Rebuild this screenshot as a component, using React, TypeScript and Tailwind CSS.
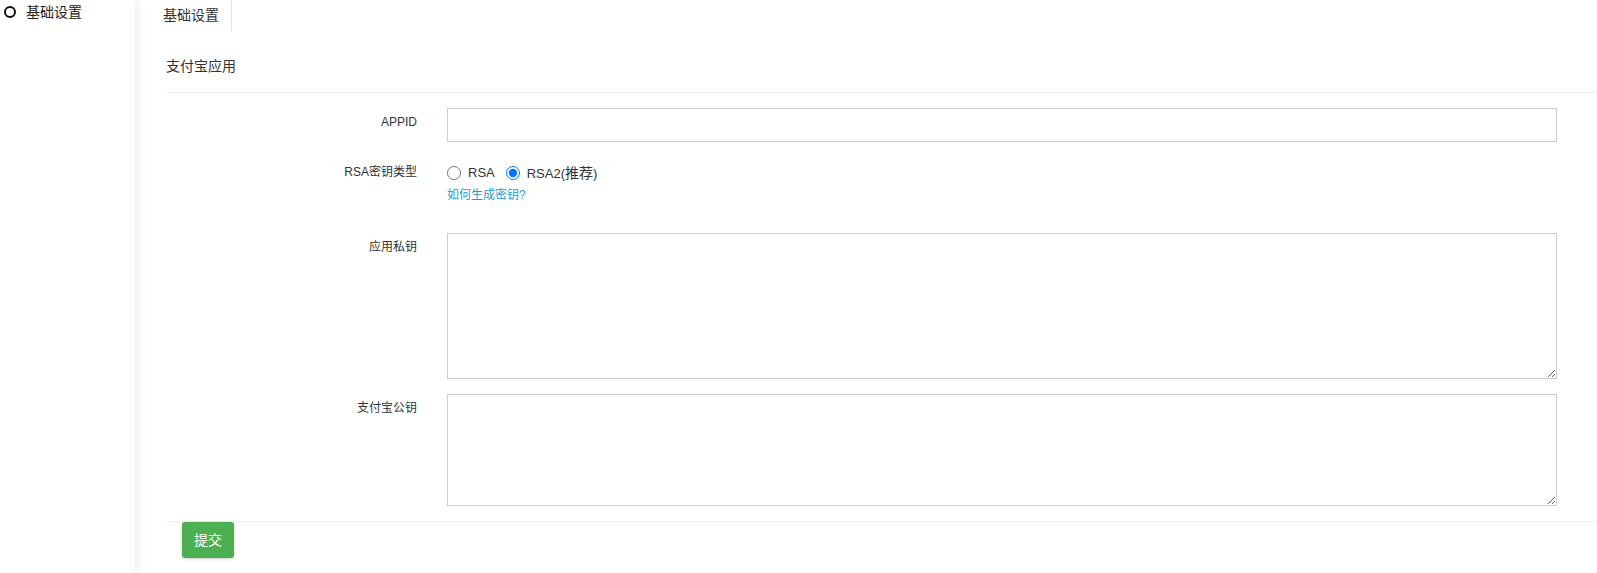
import React from 'react';

const font = "font-['Liberation_Sans','Noto_Sans_CJK_SC',sans-serif]";

export default function App() {
  return (
    <div className={`flex min-h-[573px] bg-white text-[#333] ${font}`}>
      <aside className="w-[135px] shrink-0 bg-white shadow-[0_0_12px_rgba(0,0,0,0.12)] z-10">
        <div className="flex items-center h-[24px] pl-[4px]">
          <span className="w-[12px] h-[12px] rounded-full border-2 border-[#111]" />
          <span className="ml-[10px] text-[14px] text-[#222] leading-[20px]">基础设置</span>
        </div>
      </aside>

      <main className="flex-1 pl-[13px]">
        <div className="flex h-[31px]">
          <div className="pl-[15px] pr-[12px] border-r border-[#e3e3e3] text-[14px] leading-[30px] text-[#333]">
            基础设置
          </div>
        </div>

        <div className="pl-[18px]">
          <div className="mt-[25px] text-[14px] leading-[20px] text-[#333]">支付宝应用</div>
          <div className="mt-[16px] border-t border-[#eeeeee]" />

          <div className="flex mt-[15px]">
            <div className="w-[251px] text-right text-[12px] leading-[17px] pt-[6px]">APPID</div>
            <input type="text" className="ml-[30px] mr-[40px] flex-1 h-[34px] border border-[#cccccc] outline-none px-[8px] text-[13px]" />
          </div>

          <div className="flex mt-[15px]">
            <div className="w-[251px] text-right text-[12px] leading-[17px] pt-[7px]">RSA密钥类型</div>
            <div className="ml-[30px] pt-[7px]">
              <div className="flex items-center h-[18px] text-[13px]">
                <label className="inline-flex items-center">
                  <input type="radio" name="rsa" className="m-0 w-[14px] h-[14px]" />
                  <span className="ml-[7px]">RSA</span>
                </label>
                <label className="inline-flex items-center ml-[11px]">
                  <input type="radio" name="rsa" defaultChecked className="m-0 w-[14px] h-[14px]" />
                  <span className="ml-[7px]">RSA2(<span className="text-[14px]">推荐</span>)</span>
                </label>
              </div>
              <a href="#" className="block mt-[5px] text-[12px] leading-[17px] text-[#2a9bd0]">如何生成密钥?</a>
            </div>
          </div>

          <div className="flex mt-[29px]">
            <div className="w-[251px] text-right text-[12px] leading-[17px] pt-[6px]">应用私钥</div>
            <textarea className="ml-[30px] mr-[40px] flex-1 h-[146px] border border-[#cccccc] outline-none" />
          </div>

          <div className="flex mt-[15px]">
            <div className="w-[251px] text-right text-[12px] leading-[17px] pt-[6px]">支付宝公钥</div>
            <textarea className="ml-[30px] mr-[40px] flex-1 h-[112px] border border-[#cccccc] outline-none" />
          </div>

          <div className="mt-[15px] border-t border-[#eeeeee]" />
          <button className="ml-[16px] w-[52px] h-[36px] rounded-[3px] bg-[#4caf50] text-white text-[14px] shadow-[0_1px_3px_rgba(0,0,0,0.2)]">
            提交
          </button>
        </div>
      </main>
    </div>
  );
}
